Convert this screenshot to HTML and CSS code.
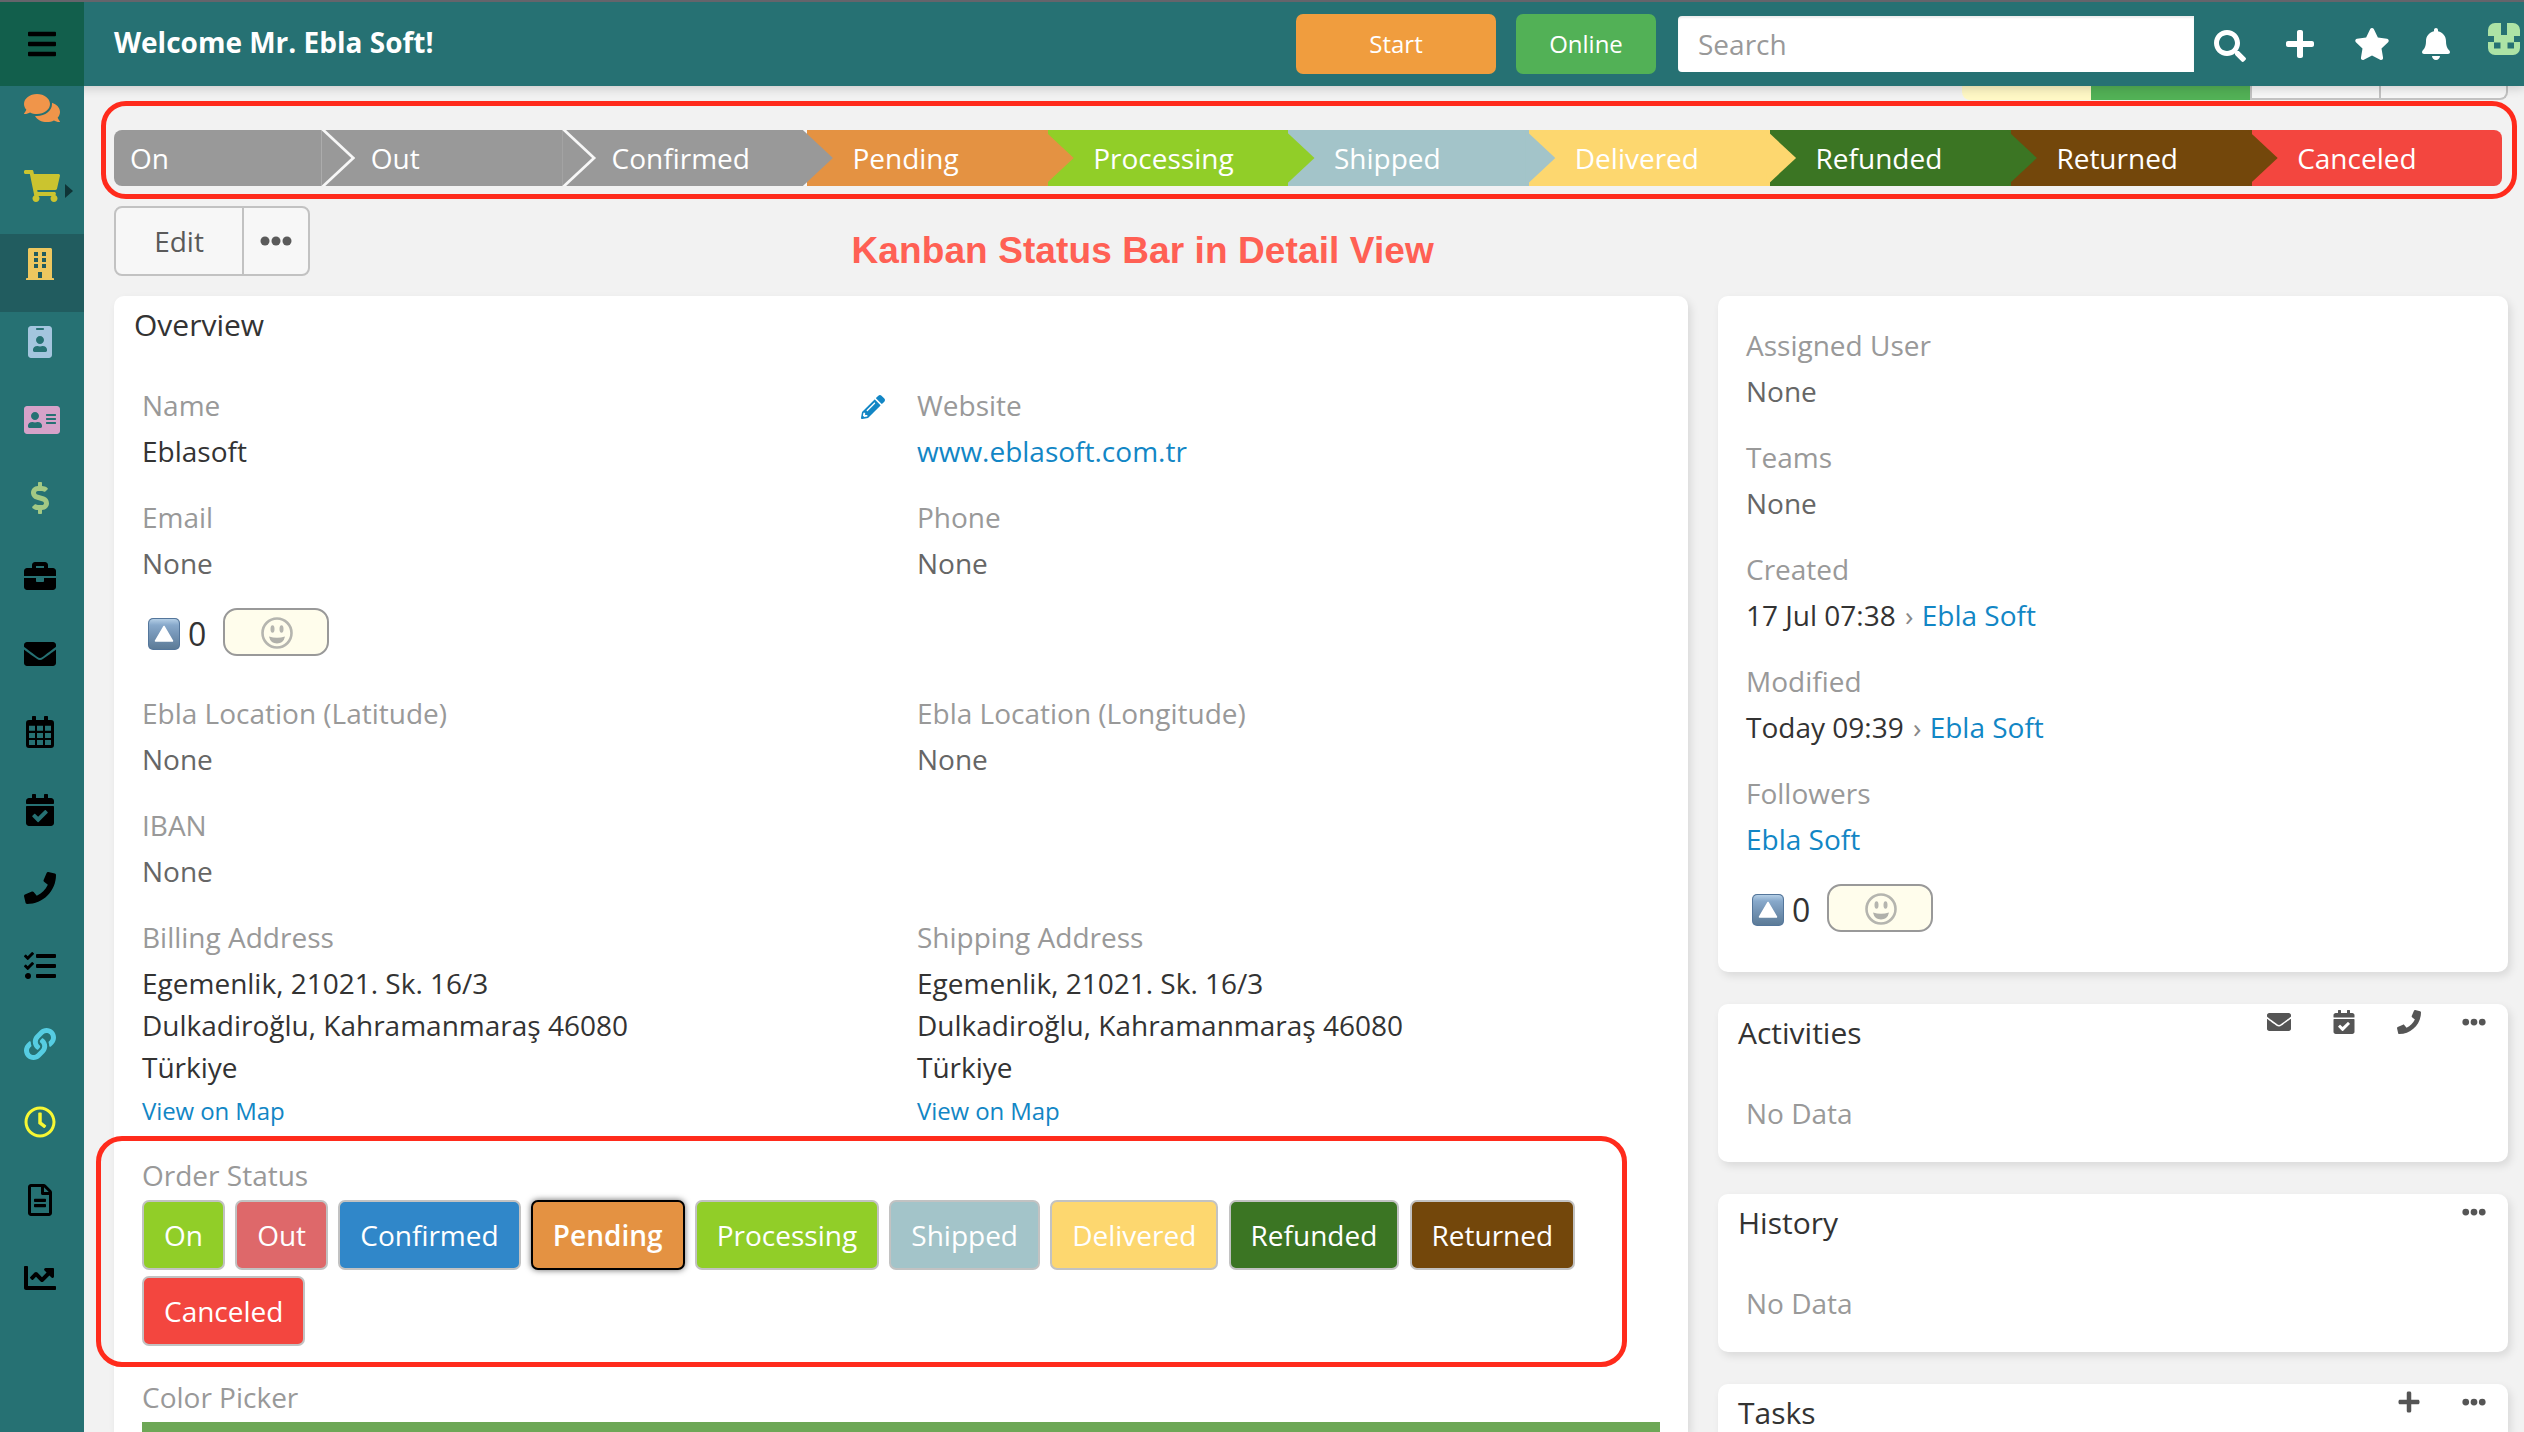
FILE: index.html
```html
<!DOCTYPE html>
<html lang="en">
<head>
<meta charset="utf-8">
<title>Eblasoft</title>
<link rel="stylesheet" href="styles.css">
</head>
<body>
<svg class="sprite" aria-hidden="true">
  <symbol id="bars" viewBox="0 0 448 512"><path d="M16 60h416a16 16 0 0 1 16 16v40a16 16 0 0 1-16 16H16a16 16 0 0 1-16-16V76a16 16 0 0 1 16-16zm0 160h416a16 16 0 0 1 16 16v40a16 16 0 0 1-16 16H16a16 16 0 0 1-16-16v-40a16 16 0 0 1 16-16zm0 160h416a16 16 0 0 1 16 16v40a16 16 0 0 1-16 16H16a16 16 0 0 1-16-16v-40a16 16 0 0 1 16-16z"/></symbol>
  <symbol id="comments" viewBox="0 0 576 512"><path d="M416 192c0-88.4-93.1-160-208-160S0 103.6 0 192c0 34.3 14.1 65.9 38 92-13.4 30.2-35.5 54.2-35.8 54.5-2.2 2.3-2.8 5.7-1.5 8.7S4.800 352 8 352c36.600 0 66.900-12.300 88.700-25 32.200 15.700 70.300 25 111.300 25 114.900 0 208-71.600 208-160zm122 220c23.900-26 38-57.700 38-92 0-66.900-53.500-124.200-129.300-148.100.9 6.600 1.300 13.300 1.300 20.100 0 105.900-107.700 192-240 192-10.800 0-21.300-.8-31.700-1.900C207.800 439.600 281.800 480 368 480c41 0 79.100-9.200 111.300-25 21.800 12.700 52.100 25 88.700 25 3.200 0 6.100-1.900 7.300-4.800 1.300-2.900.7-6.300-1.500-8.700-.3-.3-22.400-24.200-35.800-54.500z"/></symbol>
  <symbol id="cart" viewBox="0 0 576 512"><path d="M528.12 301.319l47.273-208C578.806 78.301 567.391 64 551.99 64H159.208l-9.166-44.81C147.758 8.021 137.93 0 126.529 0H24C10.745 0 0 10.745 0 24v16c0 13.255 10.745 24 24 24h69.883l70.248 343.435C147.325 417.1 136 435.222 136 456c0 30.928 25.072 56 56 56s56-25.072 56-56c0-15.674-6.447-29.835-16.824-40h209.647C430.447 426.165 424 440.326 424 456c0 30.928 25.072 56 56 56s56-25.072 56-56c0-22.172-12.888-41.332-31.579-50.405l5.517-24.276c3.413-15.018-8.002-29.319-23.403-29.319H218.117l-6.545-32h293.145c11.206 0 20.92-7.754 23.403-18.681z"/></symbol>
  <symbol id="building" viewBox="0 0 448 512"><path fill-rule="evenodd" d="M436 480h-20V24c0-13.255-10.745-24-24-24H56C42.745 0 32 10.745 32 24v456H12c-6.627 0-12 5.373-12 12v20h448v-20c0-6.627-5.373-12-12-12zM128 64h64v64h-64zM256 64h64v64h-64zM128 160h64v64h-64zM256 160h64v64h-64zM128 256h64v64h-64zM256 256h64v64h-64zM192 384h64v96h-64z"/></symbol>
  <symbol id="badge" viewBox="0 0 384 512"><path d="M336 0H48C21.500 0 0 21.500 0 48v416c0 26.500 21.500 48 48 48h288c26.500 0 48-21.500 48-48V48c0-26.500-21.500-48-48-48zM144 32h96c8.800 0 16 7.200 16 16s-7.200 16-16 16h-96c-8.800 0-16-7.200-16-16s7.200-16 16-16zm48 128c35.300 0 64 28.700 64 64s-28.700 64-64 64-64-28.700-64-64 28.700-64 64-64zm112 236.800c0 10.600-10 19.200-22.400 19.200H102.400C90 416 80 407.400 80 396.800v-19.200c0-31.800 30.100-57.600 67.200-57.600h5c12.300 5.100 25.700 8 39.800 8s27.600-2.900 39.800-8h5c37.100 0 67.200 25.800 67.200 57.600v19.200z"/></symbol>
  <symbol id="card" viewBox="0 0 576 512"><path d="M528 32H48C21.500 32 0 53.500 0 80v352c0 26.500 21.500 48 48 48h480c26.500 0 48-21.500 48-48V80c0-26.500-21.500-48-48-48zm-352 96c35.300 0 64 28.700 64 64s-28.700 64-64 64-64-28.700-64-64 28.700-64 64-64zm112 236.800c0 10.600-10 19.200-22.400 19.200H86.400C74 384 64 375.400 64 364.800v-19.200c0-31.800 30.100-57.600 67.200-57.600h5c12.300 5.100 25.700 8 39.800 8s27.600-2.900 39.800-8h5c37.100 0 67.200 25.800 67.200 57.600v19.200zM512 312c0 4.400-3.600 8-8 8H360c-4.400 0-8-3.600-8-8v-16c0-4.400 3.600-8 8-8h144c4.400 0 8 3.600 8 8v16zm0-64c0 4.400-3.600 8-8 8H360c-4.400 0-8-3.600-8-8v-16c0-4.400 3.600-8 8-8h144c4.400 0 8 3.600 8 8v16zm0-64c0 4.400-3.600 8-8 8H360c-4.400 0-8-3.600-8-8v-16c0-4.400 3.600-8 8-8h144c4.400 0 8 3.600 8 8v16z"/></symbol>
  <symbol id="dollar" viewBox="0 0 288 512"><path d="M209.200 233.400l-108-31.600C88.700 198.200 80 186.500 80 173.500c0-16.300 13.200-29.500 29.500-29.500h66.300c12.200 0 24.200 3.700 34.200 10.500 6.100 4.100 14.300 3.100 19.500-2l34.800-34c7.100-6.900 6.100-18.400-1.800-24.500C238 74.800 207.400 64.100 176 64V16c0-8.800-7.200-16-16-16h-32c-8.800 0-16 7.200-16 16v48h-2.500C45.800 64-5.400 118.700.5 183.600c4.200 46.100 39.400 83.600 83.800 96.600l102.500 30c12.500 3.700 21.200 15.300 21.200 28.300 0 16.300-13.200 29.500-29.500 29.500h-66.300C100 368 88 364.300 78 357.500c-6.100-4.100-14.300-3.100-19.500 2l-34.800 34c-7.100 6.900-6.100 18.400 1.800 24.500 24.500 19.200 55.100 29.900 86.500 30v48c0 8.800 7.200 16 16 16h32c8.800 0 16-7.200 16-16v-48.200c46.600-.9 90.300-28.600 105.700-72.700 21.500-61.600-14.600-124.800-72.500-141.700z"/></symbol>
  <symbol id="briefcase" viewBox="0 0 512 512"><path d="M320 336c0 8.840-7.160 16-16 16h-96c-8.840 0-16-7.160-16-16v-48H0v144c0 25.600 22.400 48 48 48h416c25.600 0 48-22.400 48-48V288H320v48zm144-208h-80V80c0-25.600-22.400-48-48-48H176c-25.600 0-48 22.400-48 48v48H48c-25.600 0-48 22.400-48 48v80h512v-80c0-25.600-22.400-48-48-48zm-144 0H192V96h128v32z"/></symbol>
  <symbol id="envelope" viewBox="0 0 512 512"><path d="M502.300 190.800c3.900-3.100 9.700-.2 9.700 4.700V400c0 26.500-21.500 48-48 48H48c-26.500 0-48-21.500-48-48V195.600c0-5 5.700-7.800 9.700-4.700 22.400 17.400 52.100 39.500 154.100 113.600 21.100 15.400 56.700 47.800 92.200 47.600 35.700.3 72-32.800 92.300-47.600 102-74.100 131.600-96.300 154-113.700zM256 320c23.200.4 56.600-29.200 73.400-41.400 132.700-96.300 142.800-104.700 173.400-128.700 5.800-4.500 9.200-11.500 9.200-18.900v-19c0-26.500-21.500-48-48-48H48c-26.500 0-48 21.500-48 48v19c0 7.400 3.400 14.300 9.200 18.900 30.600 23.900 40.700 32.400 173.400 128.700 16.800 12.200 50.200 41.800 73.400 41.400z"/></symbol>
  <symbol id="calendar" viewBox="0 0 448 512"><path fill-rule="evenodd" d="M96 64V12a12 12 0 0 1 12-12h40a12 12 0 0 1 12 12v52h128V12a12 12 0 0 1 12-12h40a12 12 0 0 1 12 12v52h48a48 48 0 0 1 48 48v352a48 48 0 0 1-48 48H48a48 48 0 0 1-48-48V112a48 48 0 0 1 48-48zM48 156h96v80H48zM176 156h96v80h-96zM304 156h96v80h-96zM48 270h96v80H48zM176 270h96v80h-96zM304 270h96v80h-96zM48 384h96v80H54a6 6 0 0 1-6-6zM176 384h96v80h-96zM304 384h96v74a6 6 0 0 1-6 6h-90z"/></symbol>
  <symbol id="calcheck" viewBox="0 0 448 512"><path d="M436 160H12c-6.627 0-12-5.373-12-12v-36c0-26.510 21.490-48 48-48h48V12c0-6.627 5.373-12 12-12h40c6.627 0 12 5.373 12 12v52h128V12c0-6.627 5.373-12 12-12h40c6.627 0 12 5.373 12 12v52h48c26.510 0 48 21.490 48 48v36c0 6.627-5.373 12-12 12zM12 192h424c6.627 0 12 5.373 12 12v260c0 26.510-21.490 48-48 48H48c-26.510 0-48-21.490-48-48V204c0-6.627 5.373-12 12-12zm333.296 95.947l-28.169-28.398c-4.667-4.705-12.265-4.736-16.970-.068L194.120 364.665l-45.980-46.352c-4.667-4.705-12.266-4.736-16.971-.068l-28.397 28.170c-4.705 4.667-4.736 12.265-.068 16.970l82.601 83.269c4.667 4.705 12.265 4.736 16.970.068l142.953-141.805c4.705-4.667 4.736-12.265.068-16.970z"/></symbol>
  <symbol id="phone" viewBox="0 0 512 512"><path d="M493.400 24.600l-104-24c-11.300-2.600-22.900 3.300-27.500 13.900l-48 112c-4.200 9.800-1.400 21.300 6.900 28l60.600 49.600c-36 76.700-98.900 140.500-177.200 177.200l-49.600-60.600c-6.800-8.300-18.200-11.100-28-6.900l-112 48C3.900 366.500-2 378.100.6 389.400l24 104C27.100 504.200 36.700 512 48 512c256.100 0 464-207.500 464-464 0-11.200-7.700-20.900-18.600-23.400z"/></symbol>
  <symbol id="tasks" viewBox="0 0 512 512"><path d="M139.610 35.500a12 12 0 0 0-17 0L58.930 98.810l-22.700-22.120a12 12 0 0 0-17 0L3.530 92.410a12 12 0 0 0 0 17l47.590 47.400a12.780 12.780 0 0 0 17.610 0l15.590-15.620L156.520 69a12.090 12.090 0 0 0 .09-17zm0 159.190a12 12 0 0 0-17 0l-63.680 63.720-22.700-22.100a12 12 0 0 0-17 0L3.530 252a12 12 0 0 0 0 17L51 316.500a12.770 12.770 0 0 0 17.600 0l15.700-15.690 72.200-72.220a12 12 0 0 0 .09-16.900zM64 368c-26.490 0-48.590 21.500-48.590 48S37.530 464 64 464a48 48 0 0 0 0-96zm432 16H208a16 16 0 0 0-16 16v32a16 16 0 0 0 16 16h288a16 16 0 0 0 16-16v-32a16 16 0 0 0-16-16zm0-320H208a16 16 0 0 0-16 16v32a16 16 0 0 0 16 16h288a16 16 0 0 0 16-16V80a16 16 0 0 0-16-16zm0 160H208a16 16 0 0 0-16 16v32a16 16 0 0 0 16 16h288a16 16 0 0 0 16-16v-32a16 16 0 0 0-16-16z"/></symbol>
  <symbol id="link" viewBox="0 0 512 512"><path d="M326.612 185.391c59.747 59.809 58.927 155.698.36 214.590-.11.120-.24.250-.36.370l-67.200 67.200c-59.270 59.270-155.699 59.262-214.960 0-59.270-59.260-59.270-155.700 0-214.960l37.106-37.106c9.840-9.840 26.786-3.300 27.294 10.606.648 17.722 3.826 35.527 9.690 52.721 1.986 5.822.567 12.262-3.783 16.612l-13.087 13.087c-28.026 28.026-28.905 73.660-1.155 101.960 28.024 28.579 74.086 28.749 102.325.510l67.200-67.190c28.191-28.191 28.073-73.757 0-101.830-3.701-3.694-7.429-6.564-10.341-8.569a16.037 16.037 0 0 1-6.947-12.606c-.396-10.567 3.348-21.456 11.698-29.806l21.054-21.055c5.521-5.521 14.182-6.199 20.584-1.731a152.482 152.482 0 0 1 20.522 17.197zM467.547 44.449c-59.261-59.262-155.690-59.270-214.960 0l-67.200 67.200c-.12.120-.25.250-.36.370-58.566 58.892-59.387 154.781.360 214.590a152.454 152.454 0 0 0 20.521 17.196c6.402 4.468 15.064 3.789 20.584-1.731l21.054-21.055c8.350-8.350 12.094-19.239 11.698-29.806a16.037 16.037 0 0 0-6.947-12.606c-2.912-2.005-6.640-4.875-10.341-8.569-28.073-28.073-28.191-73.639 0-101.830l67.200-67.190c28.239-28.239 74.300-28.069 102.325.510 27.750 28.300 26.872 73.934-1.155 101.960l-13.087 13.087c-4.350 4.350-5.769 10.790-3.783 16.612 5.864 17.194 9.042 34.999 9.690 52.721.509 13.906 17.454 20.446 27.294 10.606l37.106-37.106c59.271-59.259 59.271-155.699.001-214.959z"/></symbol>
  <symbol id="clock" viewBox="0 0 512 512"><path d="M256 8C119 8 8 119 8 256s111 248 248 248 248-111 248-248S393 8 256 8zm0 448c-110.500 0-200-89.500-200-200S145.500 56 256 56s200 89.500 200 200-89.500 200-200 200zm61.800-104.400l-84.900-61.700c-3.100-2.300-4.900-5.900-4.900-9.700V116c0-6.600 5.400-12 12-12h32c6.600 0 12 5.400 12 12v141.700l66.800 48.600c5.400 3.900 6.500 11.400 2.600 16.800L334.600 349c-3.900 5.300-11.400 6.500-16.800 2.600z"/></symbol>
  <symbol id="file" viewBox="0 0 384 512"><path d="M288 248v28c0 6.600-5.400 12-12 12H108c-6.600 0-12-5.400-12-12v-28c0-6.600 5.400-12 12-12h168c6.600 0 12 5.400 12 12zm-12 72H108c-6.600 0-12 5.400-12 12v28c0 6.600 5.400 12 12 12h168c6.600 0 12-5.400 12-12v-28c0-6.600-5.400-12-12-12zm108-188.100V464c0 26.500-21.500 48-48 48H48c-26.500 0-48-21.500-48-48V48C0 21.500 21.500 0 48 0h204.100C264.800 0 277 5.100 286 14.100L369.900 98c9 8.900 14.100 21.200 14.100 33.900zm-128-80V128h76.100L256 51.900zM336 464V176H232c-13.300 0-24-10.700-24-24V48H48v416h288z"/></symbol>
  <symbol id="chart" viewBox="0 0 512 512"><path d="M496 384H64V80c0-8.840-7.160-16-16-16H16C7.160 64 0 71.160 0 80v336c0 17.670 14.330 32 32 32h464c8.840 0 16-7.160 16-16v-32c0-8.840-7.160-16-16-16zM464 96H345.940c-21.380 0-32.090 25.850-16.970 40.970l32.400 32.400L288 242.750l-73.370-73.370c-12.500-12.500-32.760-12.500-45.250 0l-68.690 68.690c-6.250 6.250-6.250 16.380 0 22.630l22.620 22.620c6.250 6.250 16.380 6.250 22.630 0L192 237.250l73.370 73.370c12.500 12.500 32.760 12.500 45.250 0l96-96 32.400 32.400c15.120 15.120 40.970 4.410 40.970-16.970V112c.01-8.840-7.150-16-15.990-16z"/></symbol>
  <symbol id="search" viewBox="0 0 512 512"><path d="M505 442.700L405.300 343c-4.500-4.500-10.600-7-17-7H372c27.600-35.300 44-79.700 44-128C416 93.100 322.900 0 208 0S0 93.100 0 208s93.100 208 208 208c48.300 0 92.700-16.400 128-44v16.300c0 6.400 2.500 12.500 7 17l99.700 99.700c9.400 9.400 24.600 9.400 33.900 0l28.300-28.300c9.400-9.400 9.400-24.600.1-34zM208 336c-70.700 0-128-57.200-128-128 0-70.700 57.200-128 128-128 70.700 0 128 57.200 128 128 0 70.700-57.200 128-128 128z"/></symbol>
  <symbol id="plus" viewBox="0 0 448 512"><path d="M416 208H272V64c0-17.670-14.330-32-32-32h-32c-17.670 0-32 14.330-32 32v144H32c-17.670 0-32 14.330-32 32v32c0 17.670 14.330 32 32 32h144v144c0 17.670 14.330 32 32 32h32c17.670 0 32-14.330 32-32V304h144c17.670 0 32-14.330 32-32v-32c0-17.670-14.330-32-32-32z"/></symbol>
  <symbol id="star" viewBox="0 0 576 512"><path d="M259.300 17.800L194 150.200 47.900 171.500c-26.200 3.800-36.700 36.100-17.700 54.600l105.700 103-25 145.500c-4.500 26.300 23.200 46 46.400 33.700L288 439.600l130.700 68.700c23.200 12.200 50.900-7.400 46.400-33.700l-25-145.500 105.700-103c19-18.500 8.500-50.800-17.700-54.600L382 150.200 316.700 17.800c-11.700-23.600-45.600-23.900-57.400 0z"/></symbol>
  <symbol id="bell" viewBox="0 0 448 512"><path d="M224 512c35.320 0 63.970-28.650 63.970-64H160.030c0 35.350 28.650 64 63.970 64zm215.390-149.710c-19.320-20.760-55.470-51.990-55.470-154.290 0-77.700-54.480-139.900-127.940-155.160V32c0-17.670-14.320-32-31.980-32s-31.980 14.330-31.980 32v20.840C118.560 68.100 64.080 130.300 64.080 208c0 102.300-36.150 133.530-55.470 154.290-6 6.450-8.660 14.160-8.610 21.710.11 16.400 12.980 32 32.100 32h383.800c19.120 0 32-15.600 32.100-32 .05-7.550-2.610-15.270-8.610-21.710z"/></symbol>
  <symbol id="pencil" viewBox="0 0 512 512"><path d="M497.900 142.100l-46.100 46.100c-4.700 4.700-12.300 4.700-17 0l-111-111c-4.700-4.700-4.700-12.300 0-17l46.100-46.100c18.700-18.700 49.100-18.700 67.900 0l60.100 60.100c18.800 18.700 18.800 49.100 0 67.900zM284.200 99.800L21.600 362.400.4 483.900c-2.900 16.400 11.400 30.600 27.800 27.800l121.500-21.300 262.600-262.600c4.700-4.700 4.700-12.300 0-17l-111-111c-4.800-4.700-12.400-4.700-17.100 0zM124.100 339.900c-5.500-5.500-5.500-14.300 0-19.800l154-154c5.500-5.500 14.300-5.500 19.800 0s5.500 14.300 0 19.800l-154 154c-5.500 5.500-14.300 5.500-19.800 0zM88 424h48v36.300l-64.500 11.300-31.100-31.100L51.700 376H88v48z"/></symbol>
  <symbol id="dots" viewBox="0 0 512 512"><circle cx="80" cy="256" r="72"/><circle cx="256" cy="256" r="72"/><circle cx="432" cy="256" r="72"/></symbol>
  <symbol id="up" viewBox="0 0 32 32"><rect width="32" height="32" rx="5" fill="#54769b"/><rect x="1" y="1" width="30" height="30" rx="4.500" fill="url(#upfill)"/><path d="M16 8.500L24.500 23h-17z" fill="#fff" stroke="#fff" stroke-width="1.500" stroke-linejoin="round"/></symbol>
  <symbol id="face" viewBox="0 0 32 32"><circle cx="16" cy="16" r="14.500" fill="none" stroke="#b5b5af" stroke-width="2.600"/><ellipse cx="11.500" cy="12" rx="2" ry="3.800" fill="#b5b5af"/><ellipse cx="20.500" cy="12" rx="2" ry="3.800" fill="#b5b5af"/><path d="M8 19.500q8 2.500 16 0q-1.500 7-8 7t-8-7z" fill="#b0b0aa"/></symbol>
  <linearGradient id="upfill" x1="0" y1="0" x2="0" y2="1"><stop offset="0" stop-color="#b5cfe6"/><stop offset=".2" stop-color="#88a9cb"/><stop offset=".5" stop-color="#7696b7"/><stop offset="1" stop-color="#5c7b97"/></linearGradient>
</svg>

<header class="navbar">
  <div class="menu"><svg class="i28"><use href="#bars"/></svg></div>
  <div class="welcome">Welcome Mr. Ebla Soft!</div>
  <div class="pill start">Start</div>
  <div class="pill online">Online</div>
  <div class="search">Search</div>
  <div class="nav-icons">
    <svg class="i32"><use href="#search"/></svg>
    <svg class="i28"><use href="#plus"/></svg>
    <svg class="i36"><use href="#star"/></svg>
    <svg class="i28"><use href="#bell"/></svg>
    <svg class="avatar" viewBox="0 0 32 32"><path fill="#ade3a5" fill-rule="evenodd" d="M7 0h6v12h6V0h6a7 7 0 0 1 7 7v6h-6v6h6v6a7 7 0 0 1-7 7H7a7 7 0 0 1-7-7v-6h6v-6H0V7a7 7 0 0 1 7-7zM6 19.500h6.500V25.500H6zM19.500 19.500H26V25.500h-6.500z"/></svg>
  </div>
</header>

<div class="body">
  <nav class="sidebar">
    <a class="c-orange"><svg class="i36"><use href="#comments"/></svg></a>
    <a class="c-lime"><svg class="i36"><use href="#cart"/></svg><i class="caret"></i></a>
    <a class="c-gold active"><svg class="i28"><use href="#building"/></svg></a>
    <a class="c-sky"><svg class="i24"><use href="#badge"/></svg></a>
    <a class="c-pink"><svg class="i36"><use href="#card"/></svg></a>
    <a class="c-green"><svg class="i18"><use href="#dollar"/></svg></a>
    <a><svg class="i32"><use href="#briefcase"/></svg></a>
    <a><svg class="i32"><use href="#envelope"/></svg></a>
    <a><svg class="i28"><use href="#calendar"/></svg></a>
    <a><svg class="i28"><use href="#calcheck"/></svg></a>
    <a><svg class="i32"><use href="#phone"/></svg></a>
    <a><svg class="i32"><use href="#tasks"/></svg></a>
    <a class="c-cyan"><svg class="i32"><use href="#link"/></svg></a>
    <a class="c-yellow"><svg class="i32"><use href="#clock"/></svg></a>
    <a><svg class="i24"><use href="#file"/></svg></a>
    <a><svg class="i32"><use href="#chart"/></svg></a>
  </nav>

  <main class="content">
    <div class="peek"><span class="p-yellow"></span><span class="p-green"></span><span class="p-btn"></span><span class="p-btn last"></span></div>

    <div class="kanban">
      <div class="step past">On</div>
      <div class="step past">Out</div>
      <div class="step past edge">Confirmed</div>
      <div class="step s-pending">Pending</div>
      <div class="step s-processing">Processing</div>
      <div class="step s-shipped">Shipped</div>
      <div class="step s-delivered">Delivered</div>
      <div class="step s-refunded">Refunded</div>
      <div class="step s-returned">Returned</div>
      <div class="step s-canceled">Canceled</div>
    </div>

    <div class="actions"><span class="edit">Edit</span><span class="more"><svg class="i32"><use href="#dots"/></svg></span></div>

    <div class="columns">
      <section class="panel main">
        <h4>Overview</h4>
        <div class="fields">
          <div class="field"><label>Name</label><p>Eblasoft</p><svg class="pencil"><use href="#pencil"/></svg></div>
          <div class="field"><label>Website</label><p><a>www.eblasoft.com.tr</a></p></div>
          <div class="field"><label>Email</label><p class="none">None</p></div>
          <div class="field"><label>Phone</label><p class="none">None</p></div>
          <div class="vote wide"><svg class="i32"><use href="#up"/></svg><b>0</b><span class="react"><svg class="i32"><use href="#face"/></svg></span></div>
          <div class="field"><label>Ebla Location (Latitude)</label><p class="none">None</p></div>
          <div class="field"><label>Ebla Location (Longitude)</label><p class="none">None</p></div>
          <div class="field wide"><label>IBAN</label><p class="none">None</p></div>
          <div class="field"><label>Billing Address</label><p>Egemenlik, 21021. Sk. 16/3<br>Dulkadiroğlu, Kahramanmaraş 46080<br>Türkiye<br><a class="small">View on Map</a></p></div>
          <div class="field"><label>Shipping Address</label><p>Egemenlik, 21021. Sk. 16/3<br>Dulkadiroğlu, Kahramanmaraş 46080<br>Türkiye<br><a class="small">View on Map</a></p></div>
          <div class="field wide"><label>Order Status</label>
            <div class="statuses">
              <span class="s-processing">On</span><span class="s-out">Out</span><span class="s-confirmed">Confirmed</span><span class="s-pending selected">Pending</span><span class="s-processing">Processing</span><span class="s-shipped">Shipped</span><span class="s-delivered">Delivered</span><span class="s-refunded">Refunded</span><span class="s-returned">Returned</span><span class="s-canceled">Canceled</span>
            </div>
          </div>
          <div class="field wide picker"><label>Color Picker</label><div class="swatch"></div></div>
        </div>
      </section>

      <aside class="side">
        <section class="panel info">
          <div class="field"><label>Assigned User</label><p class="none">None</p></div>
          <div class="field"><label>Teams</label><p class="none">None</p></div>
          <div class="field"><label>Created</label><p>17 Jul 07:38 <em>›</em> <a>Ebla Soft</a></p></div>
          <div class="field"><label>Modified</label><p>Today 09:39 <em>›</em> <a>Ebla Soft</a></p></div>
          <div class="field"><label>Followers</label><p><a>Ebla Soft</a></p></div>
          <div class="vote"><svg class="i32"><use href="#up"/></svg><b>0</b><span class="react"><svg class="i32"><use href="#face"/></svg></span></div>
        </section>
        <section class="panel list">
          <h4>Activities</h4>
          <div class="tools"><svg><use href="#envelope"/></svg><svg><use href="#calcheck"/></svg><svg><use href="#phone"/></svg><svg><use href="#dots"/></svg></div>
          <p>No Data</p>
        </section>
        <section class="panel list">
          <h4>History</h4>
          <div class="tools"><svg><use href="#dots"/></svg></div>
          <p>No Data</p>
        </section>
        <section class="panel list last-panel">
          <h4>Tasks</h4>
          <div class="tools"><svg><use href="#plus"/></svg><svg><use href="#dots"/></svg></div>
        </section>
      </aside>
    </div>
  </main>
</div>

<div class="note note-bar"></div>
<div class="note note-field"></div>
<div class="caption">Kanban Status Bar in Detail View</div>
</body>
</html>
```
FILE: styles.css
```css
* { box-sizing: border-box; }
html, body { margin: 0; height: 1432px; overflow: hidden; }
body {
  position: relative;
  display: flex;
  flex-direction: column;
  background: #f2f2f2;
  color: #333;
  font: 28px/42px "Open Sans", "Noto Sans", sans-serif;
}
p, h4 { margin: 0; font-weight: 400; }
svg { fill: currentColor; flex: none; display: block; }
.sprite { position: absolute; width: 0; height: 0; }
.i18 { width: 18px; height: 32px; }
.i24 { width: 24px; height: 32px; }
.i28 { width: 28px; height: 32px; }
.i32 { width: 32px; height: 32px; }
.i36 { width: 36px; height: 32px; }
a { color: #1286c5; }

/* Top bar */
.navbar {
  position: relative;
  z-index: 2;
  flex: none;
  display: flex;
  align-items: center;
  height: 86px;
  border-top: 2px solid #65646b;
  background: #267173;
  color: #fff;
  box-shadow: 0 2px 10px rgba(0, 0, 0, .18);
}
.menu {
  display: flex;
  align-items: center;
  justify-content: center;
  width: 84px;
  height: 84px;
  background: #125f4c;
  color: #000;
}
.welcome { flex: 1; padding-left: 30px; font-weight: 700; line-height: 40px; margin-top: -4px; white-space: nowrap; }
.pill { height: 60px; border-radius: 7px; font-size: 24px; line-height: 60px; text-align: center; }
.start { width: 200px; margin-right: 20px; background: #f09d3e; }
.online { width: 140px; margin-right: 22px; background: #52b156; }
.search {
  width: 516px;
  height: 56px;
  padding-left: 20px;
  border-radius: 4px 0 0 4px;
  background: #fff;
  box-shadow: inset 0 2px 2px rgba(0, 0, 0, .07);
  color: #999;
  line-height: 56px;
}
.nav-icons { display: flex; align-items: center; width: 330px; padding-left: 20px; }
.nav-icons svg:nth-child(1) { margin: 4px 40px 0 0; }
.nav-icons svg:nth-child(2) { margin-right: 40px; }
.nav-icons svg:nth-child(3) { margin-right: 32px; }
.nav-icons svg:nth-child(4) { margin-right: 38px; }
.avatar { width: 32px; height: 32px; margin-top: -10px; }

/* Left rail */
.body { flex: none; display: flex; height: 1346px; }
.sidebar { position: relative; z-index: 3; flex: none; width: 84px; background: #267173; color: #000; }
.sidebar a {
  position: relative;
  display: flex;
  justify-content: center;
  width: 84px;
  height: 78px;
  padding: 14px 4px 0 0;
  color: #000;
}
.sidebar a:first-child { height: 70px; padding-top: 6px; }
.sidebar .i36 { margin-left: 4px; }
.sidebar .active { background: #215c5f; }
.caret { position: absolute; left: 65px; top: 28px; border: 7px solid transparent; border-left: 8px solid #0f3436; border-right: 0; }
.sidebar .c-orange { color: #f0954a; }
.sidebar .c-lime { color: #cbc42f; }
.sidebar .c-gold { color: #edc75f; }
.sidebar .c-sky { color: #a4c5de; }
.sidebar .c-pink { color: #d6a2c9; }
.sidebar .c-green { color: #a3c984; }
.sidebar .c-cyan { color: #56cde2; }
.sidebar .c-yellow { color: #f7f734; }

.content { flex: 1; padding: 0 16px 0 30px; }
.peek { display: flex; justify-content: flex-end; height: 14px; }
.p-yellow { width: 129px; background: #fff8c5; border-radius: 0 0 0 8px; }
.p-green { width: 159px; background: #52b156; }
.p-btn { width: 129px; background: #f7f7f7; border: 2px solid #c2c2c2; border-top: 0; border-right: 0; }
.p-btn.last { border-right: 2px solid #c2c2c2; border-radius: 0 0 8px 0; }

/* Status path */
.kanban {
  display: flex;
  width: 2388px;
  height: 56px;
  margin-top: 30px;
  border-radius: 8px;
  overflow: hidden;
  color: #fff;
  line-height: 56px;
}
.step { position: relative; width: 240.8px; flex: none; padding-left: 45.5px; }
.step:first-child { width: 211.3px; padding-left: 16px; }
.step:last-child { flex: 1; }
.step::before, .step::after { content: ""; position: absolute; z-index: 1; top: 0; left: calc(100% - 4px); width: 34px; height: 56px; }
.step::after { background: inherit; clip-path: polygon(0 0, 30px 50%, 0 100%); }
.step:last-child::after, .step::before { display: none; }
.past { background: #999; }
.past::before { display: block; background: #f7f7f7; clip-path: polygon(0 0, 4px 0, 34px 50%, 4px 100%, 0 100%); }
.edge::before { width: 4px; }

.s-out { background: #de686a; }
.s-confirmed { background: #3087c9; }
.s-pending { background: #e49242; }
.s-processing { background: #91ce28; }
.s-shipped { background: #a3c4c9; }
.s-delivered { background: #fdd76f; }
.s-refunded { background: #3b7523; }
.s-returned { background: #73470b; }
.s-canceled { background: #f3463f; }

.actions {
  display: flex;
  width: 196px;
  height: 70px;
  margin: 20px 0;
  border: 2px solid #c2c2c2;
  border-radius: 8px;
  background: #f7f7f7;
  color: #5a5a5a;
  line-height: 66px;
  text-align: center;
}
.edit { width: 128px; border-right: 2px solid #c2c2c2; }
.more { flex: 1; display: flex; align-items: center; justify-content: center; }

/* Panels */
.columns { display: flex; align-items: flex-start; gap: 30px; }
.panel { background: #fff; border-radius: 10px; box-shadow: 3px 4px 8px rgba(0, 0, 0, .1); }
.panel h4 { padding: 8px 20px 0; font-size: 30px; line-height: 42px; }
.main { width: 1574px; height: 1136px; border-radius: 10px 10px 0 0; }
.side { width: 790px; display: flex; flex-direction: column; gap: 32px; }
.fields { display: grid; grid-template-columns: 743px 743px; column-gap: 32px; row-gap: 24px; padding: 38px 28px 0; }
.field { position: relative; white-space: nowrap; }
.field label { display: block; margin-bottom: 4px; color: #999; }
.wide { grid-column: 1 / 3; }
.none { color: #666; }
.small { font-size: 24px; line-height: 1; letter-spacing: -.1px; }
.field em { margin: 0 1px 0 2px; font-style: normal; color: #888; }
.pencil { position: absolute; right: 0; top: 11px; width: 24px; height: 24px; color: #1286c5; }

.vote { display: flex; align-items: center; height: 60px; padding: 0 0 12px 6px; }
.vote .i32 { margin-top: 4px; }
.vote b { margin: 3px 17px 0 8px; font-weight: 400; font-size: 32px; }
.react { display: flex; justify-content: center; align-items: center; width: 106px; height: 48px; border: 2px solid #999; border-radius: 14px; background: #fffdec; }
.react .i32 { margin: 2px 0 0 2px; }

.statuses { display: flex; flex-wrap: wrap; gap: 6px 10.2px; }
.statuses span { height: 70px; padding: 0 20px; border: 2px solid #c2c2c2; border-radius: 7px; color: #fff; line-height: 66px; }
.statuses .selected { border-color: #000; font-weight: 600; box-shadow: 0 0 6px rgba(0, 0, 0, .6); }
.picker { margin-top: 6px; }
.swatch { height: 10px; background: #6da756; }

.info { display: flex; flex-direction: column; gap: 24px; height: 676px; padding: 28px; }
.info .vote { height: 48px; padding-bottom: 0; }
.list { position: relative; height: 158px; }
.list p { padding: 38px 28px 0; color: #999; }
.last-panel { height: 48px; border-radius: 10px 10px 0 0; }
.tools { position: absolute; right: 22px; top: 6px; display: flex; gap: 41px; color: #555; }
.tools svg { width: 24px; height: 24px; }

/* Highlights drawn over the page */
.note { position: absolute; z-index: 5; border: 5.500px solid #ff2b1c; border-radius: 25px; }
.note-bar { left: 101px; top: 101px; width: 2416px; height: 98px; }
.note-field { left: 96px; top: 1136px; width: 1531px; height: 231px; border-radius: 26px; }
.caption { position: absolute; z-index: 5; left: 851.5px; top: 229px; color: #ff6054; font: 700 37px/44px "Liberation Sans", Arial, sans-serif; letter-spacing: .1px; white-space: nowrap; }
```
